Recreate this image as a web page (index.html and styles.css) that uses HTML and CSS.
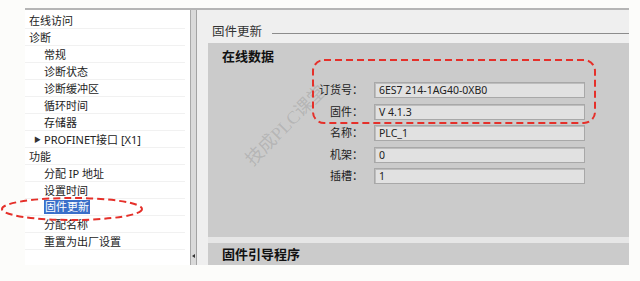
FILE: index.html
```html
<!DOCTYPE html>
<html lang="zh">
<head>
  <meta charset="UTF-8" />
  <title>固件更新</title>
  <link rel="stylesheet" href="styles.css">
</head>
<body>

<div class="window">
  <div class="nav">
    <ul class="tree">
      <li class="lvl0">在线访问</li>
      <li class="lvl0">诊断</li>
      <li class="lvl1">常规</li>
      <li class="lvl1">诊断状态</li>
      <li class="lvl1">诊断缓冲区</li>
      <li class="lvl1">循环时间</li>
      <li class="lvl1">存储器</li>
      <li class="lvl1"><span class="arrow">▶</span>PROFINET接口 [X1]</li>
      <li class="lvl0">功能</li>
      <li class="lvl1">分配 IP 地址</li>
      <li class="lvl1">设置时间</li>
      <li class="lvl1"><span class="selected">固件更新</span></li>
      <li class="lvl1">分配名称</li>
      <li class="lvl1">重置为出厂设置</li>
    </ul>
  </div>

  <div class="scrollbar"><span class="scroll-arrow"></span></div>

  <div class="main">
    <div class="main-title">
      <span>固件更新</span>
      <span class="rule"></span>
    </div>

    <section class="group online">
      <h3>在线数据</h3>
      <div class="watermark">技成PLC课堂</div>
      <div class="fields">
        <label>订货号：</label><div class="field">6ES7 214-1AG40-0XB0</div>
        <label>固件：</label><div class="field">V 4.1.3</div>
        <label>名称：</label><div class="field">PLC_1</div>
        <label>机架：</label><div class="field">0</div>
        <label>插槽：</label><div class="field">1</div>
      </div>
    </section>

    <div class="group-gap"></div>

    <section class="group boot">
      <h3>固件引导程序</h3>
    </section>
  </div>
</div>

<!-- red marks drawn over the screenshot -->
<svg class="marks" width="640" height="281" viewBox="0 0 640 281">
  <rect x="313" y="60" width="282" height="63" rx="11" />
  <ellipse cx="72" cy="209" rx="70" ry="11" />
</svg>

</body>
</html>
```

FILE: styles.css
```css
body {
  margin: 0;
  background: #fcfcfa;
  font-family: "Noto Sans", "Noto Sans CJK SC", sans-serif;
  color: #222;
}

.window {
  display: flex;
  width: 604px;
  height: 257px;
  margin: 8px 0 0 25px;
  border-top: 2px solid #b5b5b5;
  box-sizing: border-box;
  background: #efefef;
}

/* left tree */
.nav {
  width: 165px;
  background: #fff;
  padding-top: 2px;
}

.tree {
  list-style: none;
  margin: 0;
  padding: 0;
}

.tree li {
  display: flex;
  align-items: center;
  height: 17px;
  box-sizing: border-box;
  margin-right: 5px;
  border-bottom: 1px solid #f1f1f1;
  font-size: 11px;
  white-space: nowrap;
  overflow: hidden;
}

.tree .lvl0 {
  padding-left: 4px;
}

.tree .lvl1 {
  padding-left: 19px;
}

.arrow {
  display: inline-block;
  width: 10px;
  margin-left: -10px;
  font-size: 7px;
  color: #333;
}

.selected {
  display: inline-block;
  background: #3a6fc9;
  color: #fff;
  line-height: 14px;
  padding: 0 1px;
}

.scrollbar {
  width: 5px;
  border-left: 1px solid #a9a9a9;
  border-right: 1px solid #a3a3a3;
  background: #dadada;
  display: flex;
  align-items: flex-end;
  justify-content: center;
  padding-bottom: 7px;
  box-sizing: content-box;
}

.scroll-arrow {
  width: 0;
  height: 0;
  border-top: 2px solid transparent;
  border-bottom: 2px solid transparent;
  border-right: 3px solid #333;
}

/* right pane */
.main {
  flex: 1;
  padding-left: 11px;
}

.main-title {
  display: flex;
  align-items: center;
  height: 33px;
  padding: 7px 0 0 4px;
  box-sizing: border-box;
  font-size: 12.5px;
  color: #333;
}

.rule {
  flex: 1;
  height: 1px;
  margin: 6px 0 0 10px;
  background: #8c8c8c;
}

.group {
  background: #cbcbcb;
  position: relative;
  overflow: hidden;
}

.group h3 {
  margin: 0;
  font-size: 13px;
  font-weight: bold;
  color: #111;
}

.online {
  height: 194px;
  padding-top: 5px;
  box-sizing: border-box;
}

.online h3 {
  line-height: 16px;
  padding-left: 14px;
  margin-bottom: 18px;
}

.fields {
  display: grid;
  grid-template-columns: 155px 211px;
  grid-auto-rows: 16px;
  column-gap: 11px;
  row-gap: 5.5px;
  position: relative;
}

.fields label {
  text-align: right;
  font-size: 11px;
  line-height: 16px;
  color: #222;
}

.field {
  background: #e1e1e1;
  border: 1px solid #a8a8a8;
  box-shadow: inset 1px 1px 0 #bdbdbd;
  box-sizing: border-box;
  padding-left: 4px;
  font-size: 10.5px;
  line-height: 14px;
  color: #222;
}

.watermark {
  position: absolute;
  left: 22px;
  top: 64px;
  width: 116px;
  transform: rotate(-45deg);
  font-family: "Liberation Serif", "Noto Sans CJK SC", serif;
  font-size: 18px;
  color: rgba(110, 110, 110, 0.24);
  white-space: nowrap;
}

.group-gap {
  height: 6px;
  background: #e6e6e6;
}

.boot {
  height: 22px;
}

.boot h3 {
  line-height: 22px;
  padding-left: 14px;
}

.marks {
  position: absolute;
  top: 0;
  left: 0;
  pointer-events: none;
}

.marks rect,
.marks ellipse {
  fill: none;
  stroke: #e5302a;
  stroke-width: 2;
  stroke-dasharray: 7 4;
}
```
